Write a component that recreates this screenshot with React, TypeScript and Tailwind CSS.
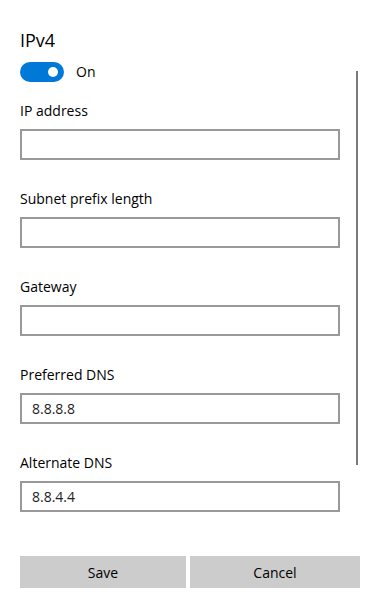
const fields = [
  { label: "IP address", value: "" },
  { label: "Subnet prefix length", value: "" },
  { label: "Gateway", value: "" },
  { label: "Preferred DNS", value: "8.8.8.8" },
  { label: "Alternate DNS", value: "8.8.4.4" },
];

export default function App() {
  return (
    <div
      className="relative h-[602px] w-[378px] overflow-hidden bg-white text-black"
      style={{ fontFamily: '"Open Sans", "Noto Sans", sans-serif' }}
    >
      {/* scrollbar */}
      <div className="absolute left-[356px] top-[71px] h-[394px] w-[2px] bg-[#7a7a7a]" />

      <div className="flex flex-col pl-5 pt-[28px]">
        <h1 className="h-6 text-[18px] leading-6">IPv4</h1>

        {/* toggle */}
        <div className="mt-[10px] flex h-5 items-center gap-3">
          <div className="flex h-5 w-11 items-center justify-end rounded-full bg-[#0078d7] pr-[6px]">
            <div className="h-[10px] w-[10px] rounded-full bg-white" />
          </div>
          <span className="text-[14px] leading-5">On</span>
        </div>

        <div className="mt-[19px] flex flex-col gap-[29px]">
          {fields.map((f) => (
            <div key={f.label} className="flex flex-col gap-2">
              <label className="h-5 text-[14px] leading-5">{f.label}</label>
              <div className="flex h-[31px] w-[320px] items-center border-2 border-[#999999] px-[10px] text-[14px] text-[#222]">
                {f.value}
              </div>
            </div>
          ))}
        </div>

        <div className="mt-[44px] flex gap-1">
          <button className="h-8 w-[166px] bg-[#cccccc] text-[14px]">Save</button>
          <button className="h-8 w-[170px] bg-[#cccccc] text-[14px]">Cancel</button>
        </div>
      </div>
    </div>
  );
}
